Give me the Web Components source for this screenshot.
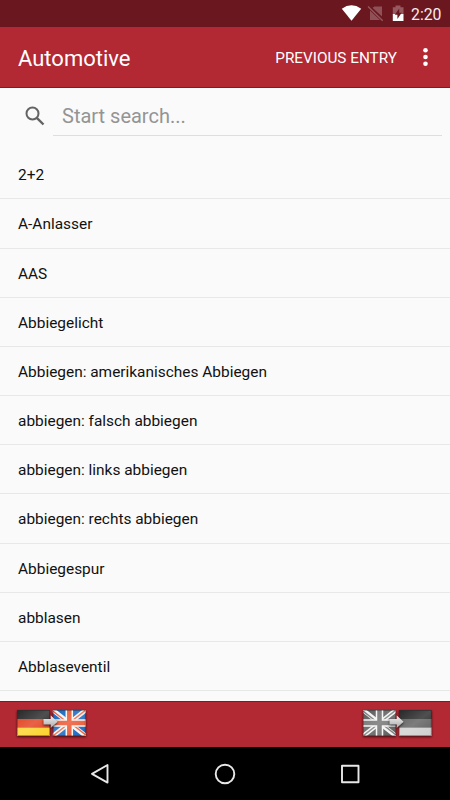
<!DOCTYPE html>
<html lang="en">
<head>
<meta charset="utf-8">
<title>Automotive</title>
<style>
    body {
        margin: 0;
        background: #fafafa;
        font-family: Roboto, "Liberation Sans", sans-serif;
    }
</style>
</head>
<body>
<dict-app>
    <status-bar slot="top" time="2:20"></status-bar>
    <tool-bar slot="top" heading="Automotive">Previous entry</tool-bar>
    <search-field placeholder="Start search..."></search-field>
    <word-row>2+2</word-row>
    <word-row>A-Anlasser</word-row>
    <word-row>AAS</word-row>
    <word-row>Abbiegelicht</word-row>
    <word-row>Abbiegen: amerikanisches Abbiegen</word-row>
    <word-row>abbiegen: falsch abbiegen</word-row>
    <word-row>abbiegen: links abbiegen</word-row>
    <word-row>abbiegen: rechts abbiegen</word-row>
    <word-row>Abbiegespur</word-row>
    <word-row>abblasen</word-row>
    <word-row>Abblaseventil</word-row>
    <language-bar slot="bottom">
        <flag-pair from="de" to="uk"></flag-pair>
        <flag-pair from="uk" to="de" inactive></flag-pair>
    </language-bar>
    <nav-buttons slot="bottom"></nav-buttons>
</dict-app>

<script>
class DictApp extends HTMLElement {
    constructor () {
        super();
        this.attachShadow({ mode: 'open' });

        this.shadowRoot.innerHTML = `
            <style>
                :host {
                    display: flex;
                    flex-direction: column;
                    height: 800px;
                    overflow: hidden;
                }

                main {
                    flex: 1;
                    min-height: 0;
                    overflow: hidden;
                }
            </style>

            <slot name="top"></slot>
            <main><slot></slot></main>
            <slot name="bottom"></slot>
        `;
    }
}

class StatusBar extends HTMLElement {
    constructor () {
        super();
        this.attachShadow({ mode: 'open' });

        this.shadowRoot.innerHTML = `
            <style>
                :host {
                    display: flex;
                    flex: none;
                    align-items: center;
                    justify-content: flex-end;
                    box-sizing: border-box;
                    height: 26.6px;
                    padding: 1px 8.5px 0 0;
                    background: #6a171f;
                    color: #f6eeee;
                    font-size: 15.8px;
                }

                svg {
                    display: block;
                    height: 20px;
                }

                span {
                    line-height: 20px;
                    margin: 2px 0 0 5.5px;
                }
            </style>

            <svg width="66" height="20" viewBox="340 4 66 20">
                <path fill="#fff" d="M351.5 20.8 341.8 8.7Q351.500 1.800 361.200 8.700Z"/>
                <path fill="#8f5157" d="M374.500 6.500H382V16.500L372.500 7.700ZM370 10.500 380 20H370Z"/>
                <path stroke="#96595f" stroke-width="1.300" d="M368 6.500 382.700 20.700"/>
                <path fill="#96595f" d="M395.500 5.500h5v1.800h3V14h-10.700V7.300h2.700z"/>
                <path fill="#fff" d="M392.800 14h10.700v7h-10.700z"/>
                <path fill="#6a171f" d="M399.200 8.500v4.300h2.500l-4.300 6.200v-4.300h-2.600z"/>
            </svg>
            <span></span>
        `;
    }
    connectedCallback() {
        this.shadowRoot.querySelector('span').textContent = this.getAttribute('time');
    }
}

class ToolBar extends HTMLElement {
    constructor () {
        super();
        this.attachShadow({ mode: 'open' });

        this.shadowRoot.innerHTML = `
            <style>
                :host {
                    display: flex;
                    flex: none;
                    align-items: center;
                    box-sizing: border-box;
                    height: 61.4px;
                    padding: 2px 19px 0 18px;
                    background: #b22833;
                    border-bottom: 1px solid #a20d14;
                    color: #fff;
                }

                h1 {
                    flex: 1;
                    margin: 0;
                    padding-top: 1.5px;
                    font-size: 22px;
                    font-weight: 400;
                }

                .action {
                    font-size: 15.3px;
                    text-transform: uppercase;
                }

                svg {
                    display: block;
                    margin: -1.5px 0 0 24px;
                }
            </style>

            <h1></h1>
            <div class="action"><slot></slot></div>
            <svg width="10" height="20" viewBox="0 0 10 20" fill="#fff">
                <circle cx="4.500" cy="3.300" r="2.300"/>
                <circle cx="4.500" cy="10" r="2.300"/>
                <circle cx="4.500" cy="16.700" r="2.300"/>
            </svg>
        `;
    }
    connectedCallback() {
        this.shadowRoot.querySelector('h1').textContent = this.getAttribute('heading');
    }
}

class SearchField extends HTMLElement {
    constructor () {
        super();
        this.attachShadow({ mode: 'open' });

        this.shadowRoot.innerHTML = `
            <style>
                :host {
                    display: flex;
                    box-sizing: border-box;
                    height: 62.3px;
                    padding: 8px 8px 0 25px;
                }

                svg {
                    display: block;
                    flex: none;
                    margin: 10px 8px 0 0;
                }

                .field {
                    flex: 1;
                    box-sizing: border-box;
                    height: 40px;
                    padding-left: 9px;
                    border-bottom: 1px solid #dedede;
                    color: #949494;
                    font-size: 20px;
                    line-height: 40px;
                }
            </style>

            <svg width="20" height="20" viewBox="0 0 20 20" fill="none" stroke="#636363">
                <circle cx="7.500" cy="7.500" r="6" stroke-width="2"/>
                <path d="M11.800 11.800 18.500 18.500" stroke-width="2.400"/>
            </svg>
            <div class="field"></div>
        `;
    }
    connectedCallback() {
        this.shadowRoot.querySelector('.field').textContent = this.getAttribute('placeholder');
    }
}

class WordRow extends HTMLElement {
    constructor () {
        super();
        this.attachShadow({ mode: 'open' });

        this.shadowRoot.innerHTML = `
            <style>
                :host {
                    display: block;
                    box-sizing: border-box;
                    height: 49.17px;
                    padding-left: 18px;
                    border-bottom: 1px solid #e8e8e8;
                    color: #111;
                    font-size: 15.43px;
                    line-height: 50.8px;
                }
            </style>

            <slot></slot>
        `;
    }
}

class LanguageBar extends HTMLElement {
    constructor () {
        super();
        this.attachShadow({ mode: 'open' });

        this.shadowRoot.innerHTML = `
            <style>
                :host {
                    display: flex;
                    flex: none;
                    align-items: center;
                    justify-content: space-between;
                    box-sizing: border-box;
                    height: 46px;
                    padding: 0 16.5px 1px 14px;
                    background: #b22833;
                    border-top: 1px solid #a20d14;
                }
            </style>

            <slot></slot>
        `;
    }
}

// flags are drawn in a 33x26 box
const flags = {
    de: `
        <path fill="#292929" d="M0 0h33v9H0z"/>
        <path fill="#e2401f" d="M0 9h33v8.500H0z"/>
        <path fill="#fbd42c" d="M0 17.500h33V26H0z"/>
    `,
    uk: `
        <path fill="#1766c0" d="M0 0h33v26H0z"/>
        <path stroke="#f4f4f4" stroke-width="4.500" d="M0 0 33 26M33 0 0 26"/>
        <path stroke="#ee6039" stroke-width="1.500" d="M0 1 14 12M33 0 19 11M0 26 14 15M33 25 19 14"/>
        <path stroke="#f8f4f0" stroke-width="7.500" d="M16.500 0v26M0 13h33"/>
        <path stroke="#ea5630" stroke-width="4.500" d="M16.500 0v26M0 13h33"/>
    `
};

class FlagPair extends HTMLElement {
    constructor () {
        super();
        this.attachShadow({ mode: 'open' });
    }
    connectedCallback() {
        const from = flags[this.getAttribute('from')];
        const to = flags[this.getAttribute('to')];

        this.shadowRoot.innerHTML = `
            <style>
                :host {
                    display: block;
                }

                svg {
                    display: block;
                }

                .flag {
                    filter: drop-shadow(.7px 1px .8px rgba(0, 0, 0, .65));
                }

                :host([inactive]) .flag {
                    filter: grayscale(1) drop-shadow(.7px 1px .8px rgba(0, 0, 0, .65));
                }

                .arrow {
                    filter: drop-shadow(.5px 1px .8px rgba(0, 0, 0, .7));
                }
            </style>

            <svg width="74" height="32" viewBox="0 0 74 32">
                <defs>
                    <linearGradient id="shine" x2="1" y2="1">
                        <stop offset="0" stop-color="#fff" stop-opacity="0"/>
                        <stop offset=".5" stop-color="#fff" stop-opacity=".18"/>
                        <stop offset="1" stop-color="#fff" stop-opacity="0"/>
                    </linearGradient>
                    <linearGradient id="metal" x2="0" y2="1">
                        <stop offset="0" stop-color="#f2f2f2"/>
                        <stop offset="1" stop-color="#a8a8a8"/>
                    </linearGradient>
                </defs>
                <g class="flag">
                    <svg x="3" y="2" width="33" height="26">
                        ${from}
                        <path fill="url(#shine)" stroke="#333" stroke-opacity=".4" d="M.5.5h32v25H.5z"/>
                    </svg>
                </g>
                <g class="flag">
                    <svg x="38.800" y="2" width="33" height="26">
                        ${to}
                        <path fill="url(#shine)" stroke="#333" stroke-opacity=".4" d="M.5.5h32v25H.5z"/>
                    </svg>
                </g>
                <path class="arrow" fill="url(#metal)" d="M29.500 11h7.200V7.500l7 6.300-7 6.300v-3.500h-7.200z"/>
            </svg>
        `;
    }
}

class NavButtons extends HTMLElement {
    constructor () {
        super();
        this.attachShadow({ mode: 'open' });

        this.shadowRoot.innerHTML = `
            <style>
                :host {
                    display: flex;
                    flex: none;
                    align-items: center;
                    justify-content: space-between;
                    box-sizing: border-box;
                    height: 53px;
                    padding: 0 88px;
                    background: #000;
                }
            </style>

            <svg width="24" height="24" viewBox="0 0 24 24" fill="none" stroke="#e8e8e8" stroke-width="1.900" stroke-linejoin="round">
                <path d="M19.500 3v17.600L4 11.800z"/>
            </svg>
            <svg width="24" height="24" viewBox="0 0 24 24" fill="none" stroke="#e8e8e8" stroke-width="1.900">
                <circle cx="12" cy="12" r="9.300"/>
            </svg>
            <svg width="24" height="24" viewBox="0 0 24 24" fill="none" stroke="#e8e8e8" stroke-width="1.900" stroke-linejoin="round">
                <path d="M4 3.800h16.500v16.500H4z"/>
            </svg>
        `;
    }
}

customElements.define('dict-app', DictApp);
customElements.define('status-bar', StatusBar);
customElements.define('tool-bar', ToolBar);
customElements.define('search-field', SearchField);
customElements.define('word-row', WordRow);
customElements.define('language-bar', LanguageBar);
customElements.define('flag-pair', FlagPair);
customElements.define('nav-buttons', NavButtons);
</script>
</body>
</html>
